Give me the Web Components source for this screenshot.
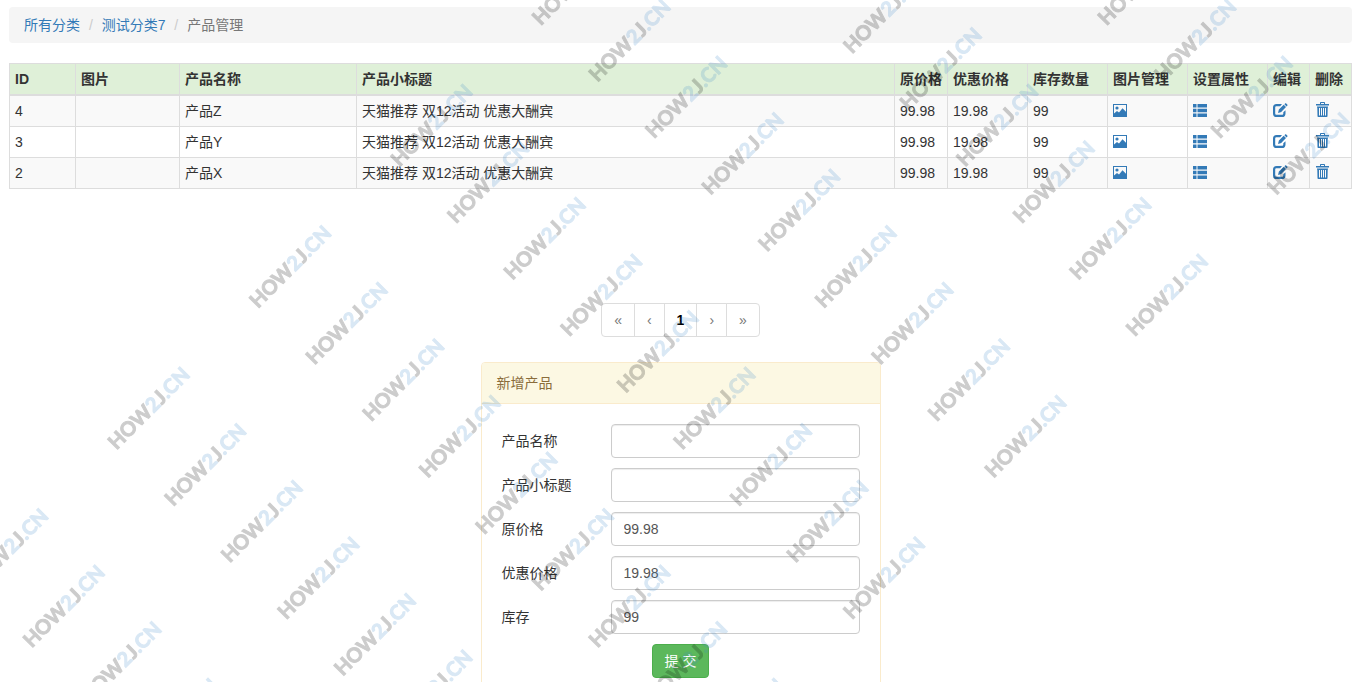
<!DOCTYPE html>
<html lang="zh-CN">
<head>
<meta charset="utf-8">
<meta name="viewport" content="width=device-width, initial-scale=1">
<title>产品管理</title>
<style>
  html { scrollbar-width: none; background: #fff; }
  body {
    margin: 7px 13px 20px 9px;
    font: 14px/20px "Liberation Sans", Arial, "Noto Sans CJK SC", sans-serif;
    color: #333;
    --link: #337ab7;
    --line: #ddd;
  }
</style>
</head>
<body>
<product-page></product-page>
<site-watermark aria-hidden="true"></site-watermark>

<script>
const define = (name, html, setup) => customElements.define(name, class extends HTMLElement {
  constructor() {
    super();
    const template = document.createElement('template');
    template.innerHTML = html;
    this.attachShadow({ mode: 'open' }).append(template.content.cloneNode(true));
  }
  connectedCallback() { if (setup) setup(this, this.shadowRoot); }
});

define('crumb-trail', `
  <style>
    :host { display: block; }
    nav { padding: 8px 15px; background: #f5f5f5; border-radius: 4px; }
    a { color: var(--link); text-decoration: none; }
    a:hover { text-decoration: underline; }
    .sep::before { content: "/\\00a0"; padding: 0 5px; color: #ccc; }
    .here { color: #777; }
  </style>
  <nav aria-label="导航">
    <a href="#categories">所有分类</a>
    <span class="sep"></span><a href="#category">测试分类7</a>
    <span class="sep"></span><span class="here"><slot></slot></span>
  </nav>`);

const icons = {
  picture: '<path fill-rule="evenodd" d="M0 1h14v13H0zM1 2v11h12V2z"/><circle cx="4" cy="5" r="1.600"/><path d="M1 10.500l3-2.500 2 1.500 3.500-4.300L13 8.800V13H1z"/>',
  list: '<path d="M0 1h3.500v3.500H0zM4.500 1H14v3.500H4.500zM0 5.700h3.500v3.600H0zM4.500 5.700H14v3.600H4.500zM0 10.500h3.500V14H0zM4.500 10.500H14V14H4.500z"/>',
  edit: '<path d="M9 1H3.600A3.600 3.600 0 0 0 0 4.600v5.800A3.600 3.600 0 0 0 3.600 14h5.300a3.600 3.600 0 0 0 3.600-3.600V7.300l-2.200 2v1.100c0 .9-.5 1.400-1.400 1.400H3.600c-.9 0-1.400-.5-1.400-1.400V4.700c0-.9.500-1.400 1.400-1.400h3.600z"/><path d="M5 10l.9-3.400 4.800-4.800 2.300 2.300-4.800 4.800zM11.400 1.200l.7-.7c.4-.3.8-.3 1.100 0l1.100 1.100c.3.400.3.800 0 1.100l-.7.700z"/>',
  trash: '<g transform="translate(1 -1)"><path fill-rule="evenodd" d="M4 1C4 .300 4.400 0 5 0h3c.6 0 1 .300 1 1v1h4v1.500H0V2h4zM5 1v1h3V1zM1 4.500h11v1h-.300l-.200 8.700c0 .5-.3.800-.8.800H2.300c-.5 0-.8-.3-.8-.800L1.300 5.500H1zM3 6v7.500h1V6zM5 6v7.500h1V6zM7 6v7.500h1V6zM9 6v7.500h1V6z"/></g>'
};

define('icon-link', `
  <style>
    :host { display: block; }
    a { display: block; width: 15px; height: 15px; color: var(--link); margin: 2px 0 3px; }
    svg { display: block; fill: currentColor; overflow: visible; }
  </style>
  <a href="#"><svg width="15" height="15" viewBox="0 0 15 15" aria-hidden="true"></svg></a>`,
  (host, root) => {
    root.querySelector('a').href = '#' + host.getAttribute('name');
    root.querySelector('a').setAttribute('aria-label', host.getAttribute('label'));
    root.querySelector('svg').innerHTML = icons[host.getAttribute('name')];
  });

define('product-table', `
  <style>
    :host { display: block; }
    table { width: 100%; table-layout: fixed; border-collapse: collapse; border: 1px solid var(--line); }
    th, td { padding: 5px; border: 1px solid var(--line); text-align: left; vertical-align: top; white-space: nowrap; height: 20px; }
    th { border-bottom-width: 2px; background: #dff0d8; }
    tbody tr:nth-child(odd) { background: #f9f9f9; }
    .id { width: 55px; } .pic { width: 93px; } .name { width: 166px; }
    .price { width: 42px; } .mid { width: 69px; } .act { width: 31px; }
  </style>
  <table>
    <thead><tr>
      <th class="id">ID</th><th class="pic">图片</th><th class="name">产品名称</th><th>产品小标题</th>
      <th class="price">原价格</th><th class="mid">优惠价格</th><th class="mid">库存数量</th>
      <th class="mid">图片管理</th><th class="mid">设置属性</th><th class="act">编辑</th><th class="act">删除</th>
    </tr></thead>
    <tbody></tbody>
  </table>`,
  (host, root) => {
    const rows = [[4, '产品Z'], [3, '产品Y'], [2, '产品X']];
    root.querySelector('tbody').innerHTML = rows.map(([id, name]) => `
      <tr><td>${id}</td><td></td><td>${name}</td><td>天猫推荐 双12活动 优惠大酬宾</td>
      <td>99.98</td><td>19.98</td><td>99</td>
      <td><icon-link name="picture" label="图片管理"></icon-link></td>
      <td><icon-link name="list" label="设置属性"></icon-link></td>
      <td><icon-link name="edit" label="编辑"></icon-link></td>
      <td><icon-link name="trash" label="删除"></icon-link></td></tr>`).join('');
  });

define('page-nav', `
  <style>
    :host { display: flex; justify-content: center; }
    nav { display: flex; }
    a { padding: 6px 12px; border: 1px solid var(--line); background: #fff; color: #777; text-decoration: none; }
    a + a { margin-left: -1px; }
    a:first-child { border-radius: 4px 0 0 4px; }
    a:last-child { border-radius: 0 4px 4px 0; }
    [aria-current] { color: #000; font-weight: bold; }
  </style>
  <nav aria-label="分页"><a href="#first">«</a><a href="#prev">‹</a><a href="#1" aria-current="page">1</a><a href="#next">›</a><a href="#last">»</a></nav>`);

define('form-field', `
  <style>
    :host { display: grid; grid-template-columns: 109px 1fr; align-items: center; }
    input {
      box-sizing: border-box; width: 100%; height: 34px; padding: 6px 12px;
      font: inherit; color: #555; background: #fff;
      border: 1px solid #ccc; border-radius: 4px; box-shadow: inset 0 1px 1px rgba(0,0,0,.075);
    }
  </style>
  <label for="field"><slot></slot></label><input id="field" type="text">`,
  (host, root) => { root.querySelector('input').value = host.getAttribute('value') || ''; });

define('add-panel', `
  <style>
    :host { display: block; box-sizing: border-box; width: 400px; max-width: 100%; margin: 0 auto; border: 1px solid #faebcc; border-radius: 4px; }
    header { padding: 10px 15px; color: #8a6d3b; background: #fcf8e3; border-bottom: 1px solid #faebcc; border-radius: 3px 3px 0 0; }
    form { display: grid; gap: 10px; padding: 20px; }
    button {
      justify-self: center; padding: 6px 12px; font: inherit; color: #fff;
      background: #5cb85c; border: 1px solid #4cae4c; border-radius: 4px;
    }
  </style>
  <header><slot name="title"></slot></header>
  <form>
    <form-field>产品名称</form-field>
    <form-field>产品小标题</form-field>
    <form-field value="99.98">原价格</form-field>
    <form-field value="19.98">优惠价格</form-field>
    <form-field value="99">库存</form-field>
    <button type="submit">提 交</button>
  </form>`);

define('product-page', `
  <style>
    :host { display: block; }
    product-table { margin-top: 20px; }
    page-nav { margin-top: 114px; }
    add-panel { margin-top: 25px; }
  </style>
  <crumb-trail>产品管理</crumb-trail>
  <product-table></product-table>
  <page-nav></page-nav>
  <add-panel><span slot="title">新增产品</span></add-panel>`);

/* Diagonal brand stamps: a grid of 200 by 80 cells turned by 45 degrees, laid over the page. */
define('site-watermark', `
  <style>
    :host { position: fixed; inset: 0; overflow: hidden; pointer-events: none; }
    svg { display: block; width: 100%; height: 100%; }
    text { font: bold 20px Lato, sans-serif; fill: #000; stroke: #000; stroke-width: 1px; opacity: .2; }
    .tint { fill: #428bca; stroke: #428bca; }
  </style>
  <svg><g transform="translate(258 309) rotate(-45)"></g></svg>`,
  (host, root) => {
    let stamps = '';
    for (let row = 0; row < 9; row++) {
      for (let col = -2; col < 5; col++) {
        const x = col * 200, y = row * 80;
        const px = 258 + (x + y) * Math.SQRT1_2, py = 309 + (y - x) * Math.SQRT1_2;
        if (px < -80 || px > 1365 || py < 0 || py > 770) continue;
        stamps += `<text x="${x}" y="${y}">HOW<tspan class="tint">2</tspan>J<tspan class="tint">.CN</tspan></text>`;
      }
    }
    root.querySelector('g').innerHTML = stamps;
  });
</script>
</body>
</html>
